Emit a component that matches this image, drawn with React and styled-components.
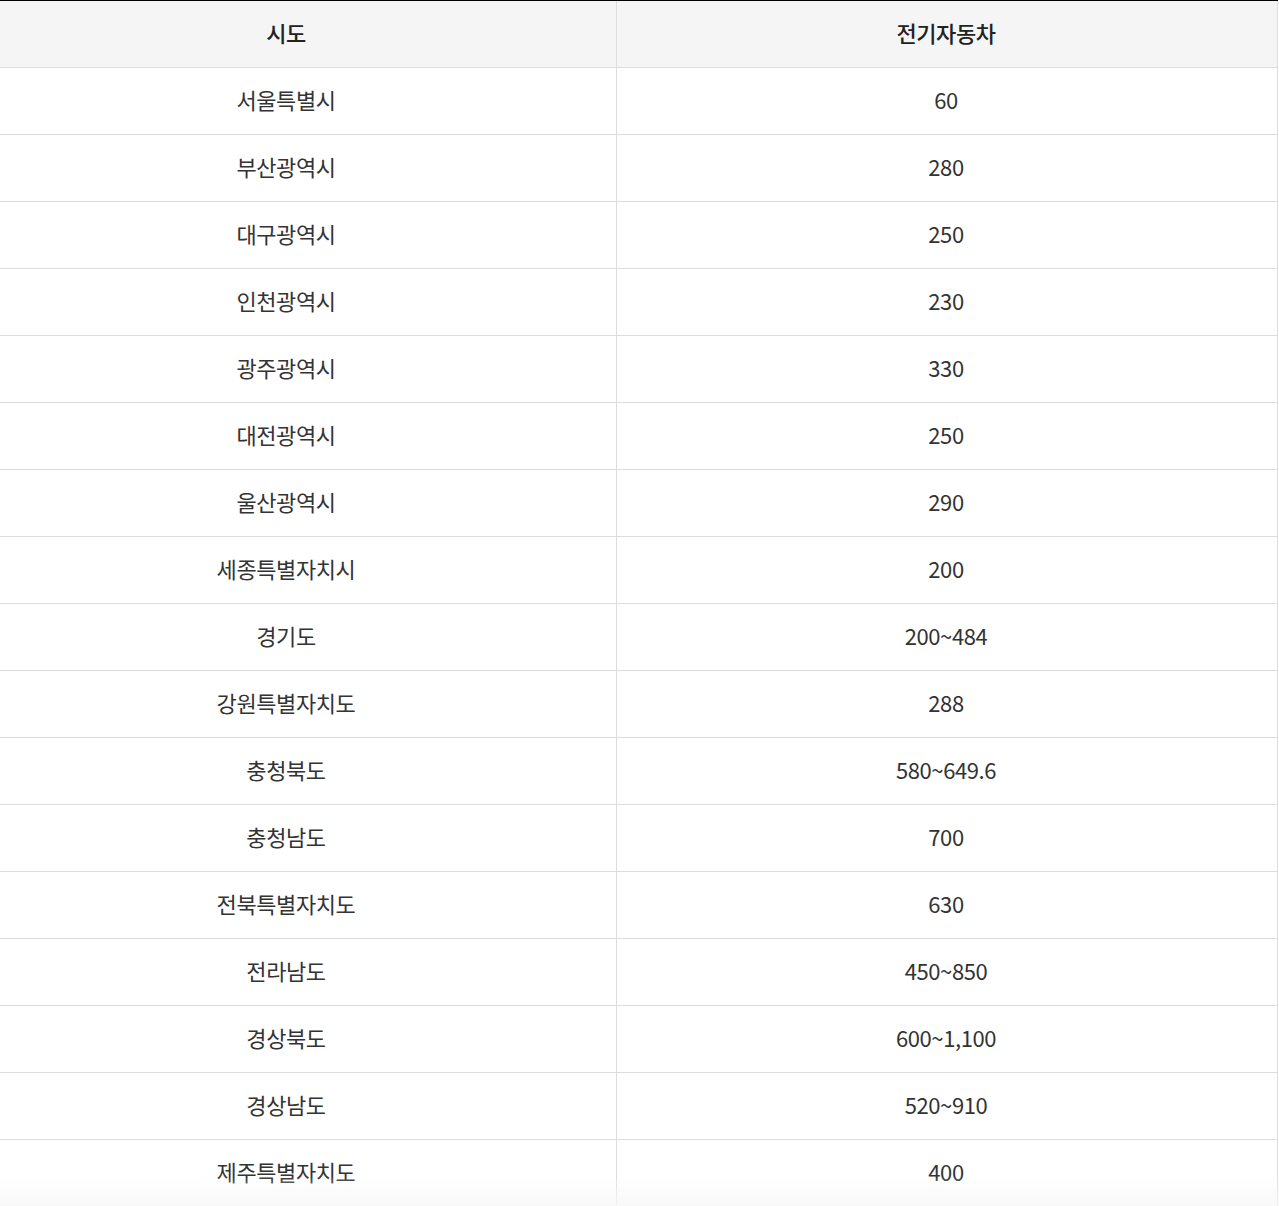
import React from 'react'
import styled, { createGlobalStyle } from 'styled-components'

const rows = [
  ['서울특별시', '60'],
  ['부산광역시', '280'],
  ['대구광역시', '250'],
  ['인천광역시', '230'],
  ['광주광역시', '330'],
  ['대전광역시', '250'],
  ['울산광역시', '290'],
  ['세종특별자치시', '200'],
  ['경기도', '200~484'],
  ['강원특별자치도', '288'],
  ['충청북도', '580~649.6'],
  ['충청남도', '700'],
  ['전북특별자치도', '630'],
  ['전라남도', '450~850'],
  ['경상북도', '600~1,100'],
  ['경상남도', '520~910'],
  ['제주특별자치도', '400'],
]

function App() {
  return (
    <>
      <Global />
      <Wrap>
        <Table>
          <HeadRow>
            <Cell first>시도</Cell>
            <Cell>전기자동차</Cell>
          </HeadRow>
          {rows.map(([city, val]) => (
            <Row key={city}>
              <Cell first>{city}</Cell>
              <Cell>{val}</Cell>
            </Row>
          ))}
        </Table>
        <Fade />
      </Wrap>
    </>
  )
}

export default App

const Global = createGlobalStyle`
  html, body {
    margin: 0;
    padding: 0;
    background: #fff;
    font-family: "Noto Sans CJK KR", "Noto Sans", sans-serif;
    color: #333;
  }
`

const Wrap = styled.div`
  position: relative;
  width: 1279px;
  height: 1206px;
  overflow: hidden;
`

const Table = styled.div`
  width: 1278px;
  display: flex;
  flex-direction: column;
  border-top: 1px solid #000;
`

const Row = styled.div`
  display: grid;
  grid-template-columns: 617px 1fr;
  height: 67px;
  box-sizing: border-box;
  border-bottom: 1px solid #ddd;
  font-weight: 400;
`

const HeadRow = styled(Row)`
  background: #f5f5f5;
  font-weight: 500;
  color: #222;
`

const Cell = styled.div`
  display: flex;
  align-items: center;
  justify-content: center;
  padding: 0 ${p => (p.first ? '44px' : '2px')} 4px 0;
  border-right: 1px solid #ddd;
  font-size: 22px;
  letter-spacing: -0.4px;
  line-height: 1;
`

const Fade = styled.div`
  position: absolute;
  left: 0;
  right: 0;
  bottom: 0;
  height: 30px;
  background: linear-gradient(to bottom, rgba(250, 250, 250, 0), rgba(247, 247, 247, 0.85));
  pointer-events: none;
`
